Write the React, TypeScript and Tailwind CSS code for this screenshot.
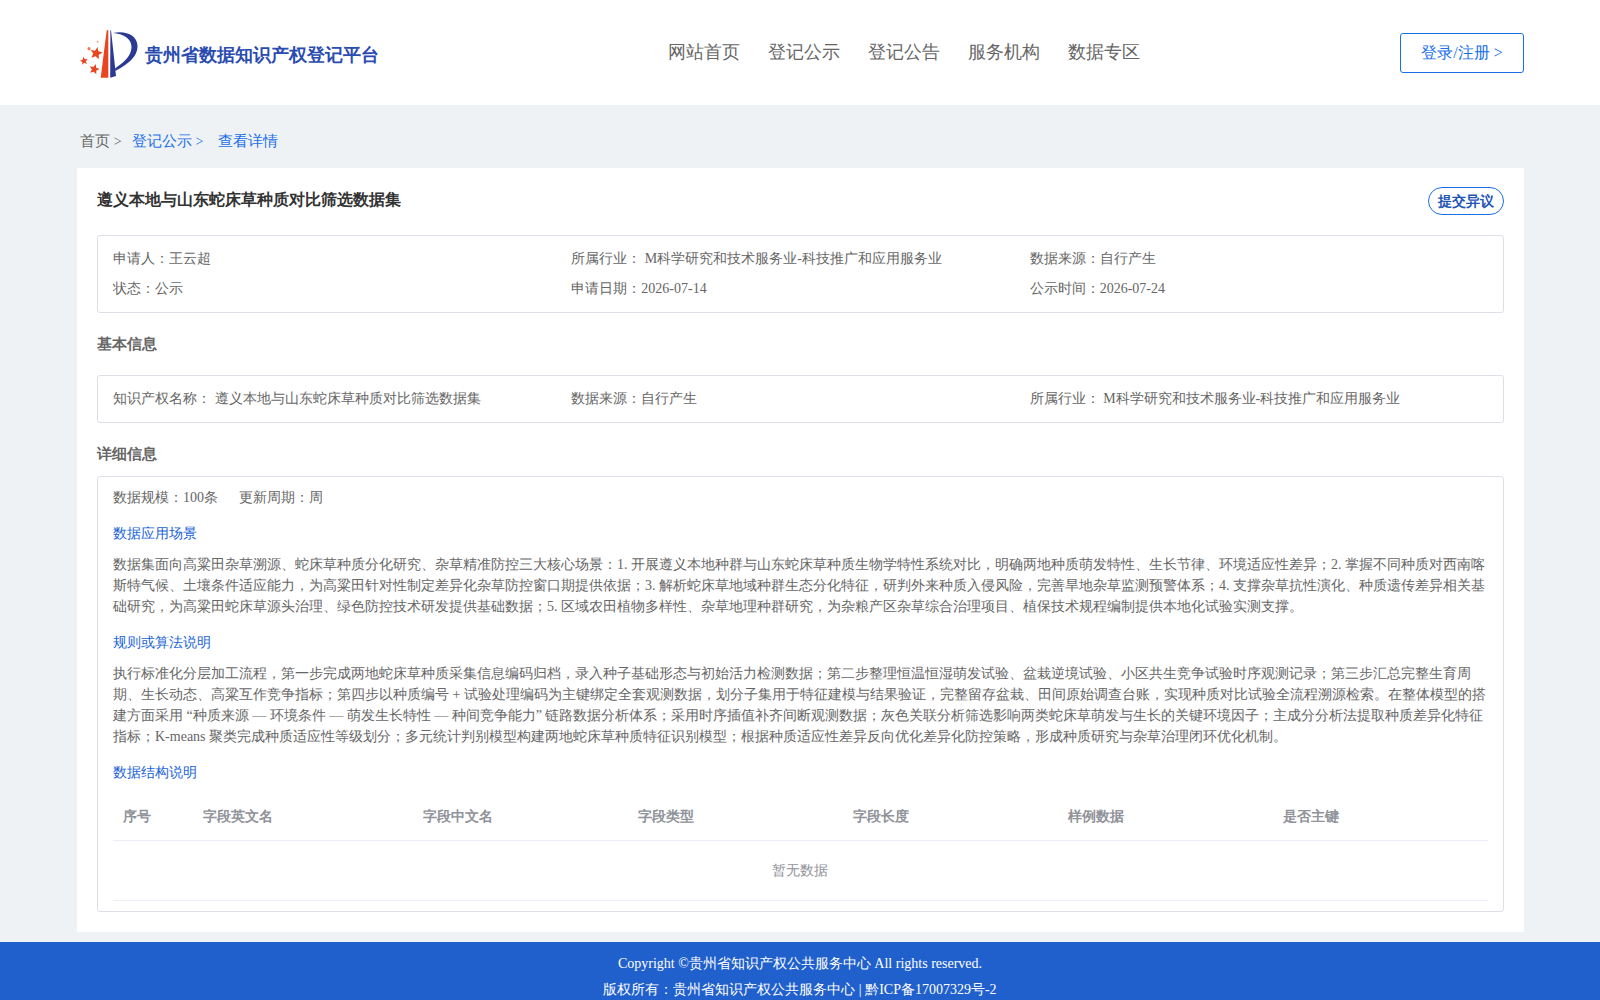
const navItems = ["网站首页", "登记公示", "登记公告", "服务机构", "数据专区"];
const columns = ["序号", "字段英文名", "字段中文名", "字段类型", "字段长度", "样例数据", "是否主键"];

const scene =
  "数据集面向高粱田杂草溯源、蛇床草种质分化研究、杂草精准防控三大核心场景：1. 开展遵义本地种群与山东蛇床草种质生物学特性系统对比，明确两地种质萌发特性、生长节律、环境适应性差异；2. 掌握不同种质对西南喀斯特气候、土壤条件适应能力，为高粱田针对性制定差异化杂草防控窗口期提供依据；3. 解析蛇床草地域种群生态分化特征，研判外来种质入侵风险，完善旱地杂草监测预警体系；4. 支撑杂草抗性演化、种质遗传差异相关基础研究，为高粱田蛇床草源头治理、绿色防控技术研发提供基础数据；5. 区域农田植物多样性、杂草地理种群研究，为杂粮产区杂草综合治理项目、植保技术规程编制提供本地化试验实测支撑。";

const rules =
  "执行标准化分层加工流程，第一步完成两地蛇床草种质采集信息编码归档，录入种子基础形态与初始活力检测数据；第二步整理恒温恒湿萌发试验、盆栽逆境试验、小区共生竞争试验时序观测记录；第三步汇总完整生育周期、生长动态、高粱互作竞争指标；第四步以种质编号 + 试验处理编码为主键绑定全套观测数据，划分子集用于特征建模与结果验证，完整留存盆栽、田间原始调查台账，实现种质对比试验全流程溯源检索。在整体模型的搭建方面采用 “种质来源 — 环境条件 — 萌发生长特性 — 种间竞争能力” 链路数据分析体系；采用时序插值补齐间断观测数据；灰色关联分析筛选影响两类蛇床草萌发与生长的关键环境因子；主成分分析法提取种质差异化特征指标；K-means 聚类完成种质适应性等级划分；多元统计判别模型构建两地蛇床草种质特征识别模型；根据种质适应性差异反向优化差异化防控策略，形成种质研究与杂草治理闭环优化机制。";

const starPoints = (cx: number, cy: number, r: number, rot: number) =>
  Array.from({ length: 10 }, (_, i) => {
    const rad = i % 2 === 0 ? r : r * 0.45;
    const a = ((rot - 90 + i * 36) * Math.PI) / 180;
    return `${(cx + rad * Math.cos(a)).toFixed(2)},${(cy + rad * Math.sin(a)).toFixed(2)}`;
  }).join(" ");

const Logo = () => (
  <svg width="60" height="50" viewBox="0 0 60 50" className="shrink-0">
    {/* stars */}
    <polygon points={starPoints(16.2, 24.3, 6.5, 12)} fill="#e8461e" />
    <polygon points={starPoints(4, 32, 4.2, -10)} fill="#e8461e" />
    <polygon points={starPoints(14.3, 40.3, 5.4, 15)} fill="#e8461e" />
    <circle cx="9" cy="19.7" r="1.6" fill="#ee7a50" />
    <circle cx="17.7" cy="12.7" r="1" fill="#f0a080" />
    {/* pole */}
    <polygon points="26.7,1.3 28.3,1.3 28.3,48.7 20.7,48.7" fill="#e8461e" />
    <polygon points="30.4,1.3 31,1.3 36,47 30.2,48.7" fill="#2a3a92" />
    {/* P bowl */}
    <path d="M33 4 C45 1 57.5 6 57.5 17 C57.5 29 46 36 35.5 42 L35 39.5 C44 33 51.5 27 51.5 18 C51.5 9 43 5 33 4 Z" fill="#2a3a92" />
  </svg>
);

const Header = () => (
  <header className="h-[105px] bg-white flex items-center pl-[80px] pr-[76px]">
    <a href="#" className="flex items-center w-[520px] pt-[2px]">
      <Logo />
      <span className="ml-[5px] mt-[4px] text-[18px] font-bold text-[#2a4cb0] whitespace-nowrap">贵州省数据知识产权登记平台</span>
    </a>
    <nav className="flex gap-[28px] ml-[68px] -mt-[1px]">
      {navItems.map((item) => (
        <a key={item} href="#" className="text-[18px] text-[#666666] whitespace-nowrap">
          {item}
        </a>
      ))}
    </nav>
    <button className="ml-auto w-[124px] h-[40px] border border-[#1a6fe8] rounded-[3px] text-[16px] text-[#1a6fe8]">
      登录/注册 &gt;
    </button>
  </header>
);

const InfoCell = ({ children }: { children: React.ReactNode }) => <div className="text-[14px] leading-[30px] text-[#666666]">{children}</div>;

const SectionLabel = ({ children }: { children: React.ReactNode }) => (
  <div className="text-[14px] leading-[21px] text-[#1a63d8]">{children}</div>
);

export default function App() {
  return (
    <div className="min-h-screen bg-[#eff2f5] font-['Liberation_Serif',serif]">
      <Header />

      <div className="pl-[80px] h-[63px] flex items-center text-[15px] pt-[10px] whitespace-pre">
        <span className="text-[#666666]">首页 <span className="text-[14px]">&gt;</span></span>
        <span className="ml-[10px] text-[#1a6fe8]">登记公示 <span className="text-[14px]">&gt;</span></span>
        <span className="ml-[15px] text-[#1a6fe8]">查看详情</span>
      </div>

      <main className="ml-[77px] mr-[76px] bg-white px-[20px] pt-[20px] pb-[20px]">
        <div className="flex justify-between h-[47px]">
          <h1 className="text-[16px] font-bold leading-[24px] text-[#333333]">遵义本地与山东蛇床草种质对比筛选数据集</h1>
          <button className="w-[76px] h-[28px] -mt-[1px] border border-[#1a6fe8] rounded-[14px] text-[14px] font-bold text-[#1f55b5]">提交异议</button>
        </div>

        <div className="border border-[#dcdfe6] rounded-[3px] px-[15px] pt-[8px] pb-[8px] grid grid-cols-3">
          <InfoCell>申请人：王云超</InfoCell>
          <InfoCell>所属行业： M科学研究和技术服务业-科技推广和应用服务业</InfoCell>
          <InfoCell>数据来源：自行产生</InfoCell>
          <InfoCell>状态：公示</InfoCell>
          <InfoCell>申请日期：2026-07-14</InfoCell>
          <InfoCell>公示时间：2026-07-24</InfoCell>
        </div>

        <h2 className="text-[15px] font-bold leading-[22px] text-[#666666] mt-[20px] mb-[20px]">基本信息</h2>

        <div className="border border-[#dcdfe6] rounded-[3px] px-[15px] py-[8px] grid grid-cols-3">
          <InfoCell>知识产权名称： 遵义本地与山东蛇床草种质对比筛选数据集</InfoCell>
          <InfoCell>数据来源：自行产生</InfoCell>
          <InfoCell>所属行业： M科学研究和技术服务业-科技推广和应用服务业</InfoCell>
        </div>

        <h2 className="text-[15px] font-bold leading-[22px] text-[#666666] mt-[20px] mb-[11px]">详细信息</h2>

        <div className="border border-[#dcdfe6] rounded-[3px] px-[15px] pt-[7px] pb-[10px]">
          <div className="text-[14px] leading-[28px] text-[#666666] flex gap-[21px]">
            <span>数据规模：100条</span>
            <span>更新周期：周</span>
          </div>

          <div className="mt-[11px]">
            <SectionLabel>数据应用场景</SectionLabel>
          </div>
          <p className="mt-[10px] text-[14px] leading-[21px] text-[#666666]">{scene}</p>

          <div className="mt-[15px]">
            <SectionLabel>规则或算法说明</SectionLabel>
          </div>
          <p className="mt-[10px] text-[14px] leading-[21px] text-[#666666]">{rules}</p>

          <div className="mt-[15px]">
            <SectionLabel>数据结构说明</SectionLabel>
          </div>

          <div className="mt-[4px] grid grid-cols-[80px_220px_215px_215px_215px_215px_1fr] border-b border-[#ebeef5] h-[54px] items-center pt-[6px]">
            {columns.map((col) => (
              <div key={col} className="px-[10px] text-[14px] font-bold text-[#909399]">
                {col}
              </div>
            ))}
          </div>
          <div className="h-[60px] pr-[2px] border-b border-[#ebeef5] flex items-center justify-center text-[14px] text-[#909399]">暂无数据</div>
        </div>
      </main>

      <footer className="mt-[10px] bg-[#2060cc] text-white text-[14px] leading-[26px] text-center pt-[9px] pb-[10px]">
        <div>Copyright ©贵州省知识产权公共服务中心 All rights reserved.</div>
        <div>版权所有：贵州省知识产权公共服务中心 | 黔ICP备17007329号-2</div>
      </footer>
    </div>
  );
}
